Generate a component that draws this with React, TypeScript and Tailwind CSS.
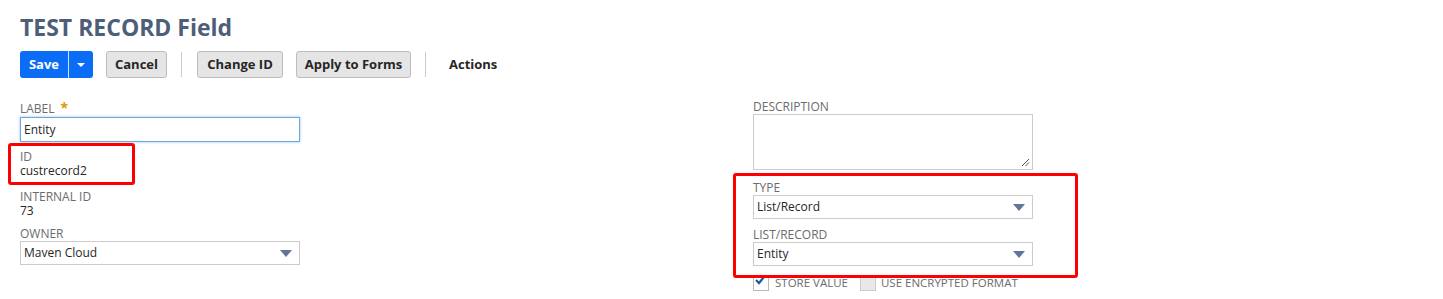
import { ReactNode } from 'react'

function Label({ children, className }: { children: ReactNode; className?: string }) {
  return <div className={'text-[12px] leading-[14px] text-[#6b6b6b] uppercase ' + (className ?? '')}>{children}</div>
}

function Select({ value }: { value: string }) {
  return (
    <div className="flex items-center justify-between h-[24px] w-[280px] border border-[#cccccc] bg-white pl-[3px] pr-[7px]">
      <span className="text-[12px] text-[#262626]">{value}</span>
      <svg width="12" height="7" viewBox="0 0 12 7">
        <path d="M0 0 H12 L6 7 Z" fill="#5f7698" />
      </svg>
    </div>
  )
}

function Btn({ children, className }: { children: ReactNode; className?: string }) {
  return (
    <button
      className={
        'h-[27px] rounded-[3px] border border-[#bdbdbd] bg-[#e5e5e5] text-[13px] font-bold text-[#262626] flex items-center justify-center ' +
        (className ?? '')
      }
    >
      {children}
    </button>
  )
}

export default function App() {
  return (
    <div className="w-[1443px] h-[299px] overflow-hidden bg-white pl-[20px] font-['Open_Sans',sans-serif]">
      {/* header */}
      <h1 className="pt-[12px] text-[23px] leading-[30px] font-bold text-[#4d5e78]">TEST RECORD Field</h1>

      <div className="mt-[9px] flex items-center h-[27px]">
        <div className="flex h-[27px] rounded-[3px] bg-[#0b6cf5] text-white">
          <span className="w-[48px] flex items-center justify-center text-[13px] font-bold">Save</span>
          <span className="w-px bg-[#cfe0fb]" />
          <span className="w-[24px] flex items-center justify-center">
            <svg width="8" height="4" viewBox="0 0 8 4">
              <path d="M0 0 H8 L4 4 Z" fill="white" />
            </svg>
          </span>
        </div>
        <Btn className="ml-[13px] w-[61px]">Cancel</Btn>
        <span className="ml-[14px] w-px h-[25px] bg-[#cccccc]" />
        <Btn className="ml-[15px] w-[86px]">Change ID</Btn>
        <Btn className="ml-[13px] w-[115px]">Apply to Forms</Btn>
        <span className="ml-[14px] w-px h-[25px] bg-[#cccccc]" />
        <span className="ml-[23px] text-[13px] font-bold text-[#262626]">Actions</span>
      </div>

      {/* form */}
      <div className="grid grid-cols-[733px_280px]">
        <div className="pt-[24px] w-[280px]">
          <div className="flex items-start h-[14px]">
            <Label>Label</Label>
            <span className="ml-[6px] text-[14px] leading-[12px] font-bold text-[#d99a00]">*</span>
          </div>
          <div className="mt-[1px] h-[25px] w-[280px] border border-[#6ea6dd] shadow-[0_0_3px_#9fc6ef] flex items-center pl-[3px] text-[12px] text-[#262626]">
            Entity
          </div>

          <div className="relative mt-[8px]">
            <Label>ID</Label>
            <div className="text-[12px] leading-[14px] text-[#262626]">custrecord2</div>
            <div className="absolute -left-[12px] -top-[7px] w-[127px] h-[42px] border-[3px] border-[#ff0000] rounded-[3px]" />
          </div>

          <div className="mt-[12px]">
            <Label>Internal ID</Label>
            <div className="text-[12px] leading-[14px] text-[#262626]">73</div>
          </div>

          <div className="mt-[9px]">
            <Label className="leading-[13px]">Owner</Label>
            <Select value="Maven Cloud" />
          </div>
        </div>

        <div className="pt-[22px]">
          <Label>Description</Label>
          <div className="relative h-[56px] w-[280px] border border-[#cccccc]">
            <svg className="absolute right-[2px] bottom-[2px]" width="9" height="9" viewBox="0 0 9 9">
              <path d="M1 8 L8 1 M4.5 8 L8 4.5" stroke="#555" strokeWidth="1" />
            </svg>
          </div>

          <div className="relative mt-[11px]">
            <Label>Type</Label>
            <Select value="List/Record" />
            <div className="mt-[9px]">
              <Label>List/Record</Label>
              <Select value="Entity" />
            </div>
            <div className="absolute z-10 -left-[20px] -top-[8px] -right-[45px] -bottom-[12px] border-[3px] border-[#ff0000] rounded-[3px]" />
          </div>

          <div className="mt-[8px] flex items-center h-[18px] w-[400px]">
            <span className="relative w-[16px] h-[16px] border border-[#bbbbbb] bg-white">
              <svg className="absolute left-[1px] top-[1px]" width="10" height="8" viewBox="0 0 10 8">
                <path d="M1 3 L4 6 L9 0" stroke="#1e56a8" strokeWidth="2.2" fill="none" />
              </svg>
            </span>
            <span className="ml-[6px] text-[11.5px] text-[#6b6b6b]">STORE VALUE</span>
            <span className="ml-[12px] w-[16px] h-[16px] border border-[#cccccc] bg-[#e8e8e8]" />
            <span className="ml-[5px] text-[11.5px] text-[#6b6b6b]">USE ENCRYPTED FORMAT</span>
          </div>
        </div>
      </div>
    </div>
  )
}
